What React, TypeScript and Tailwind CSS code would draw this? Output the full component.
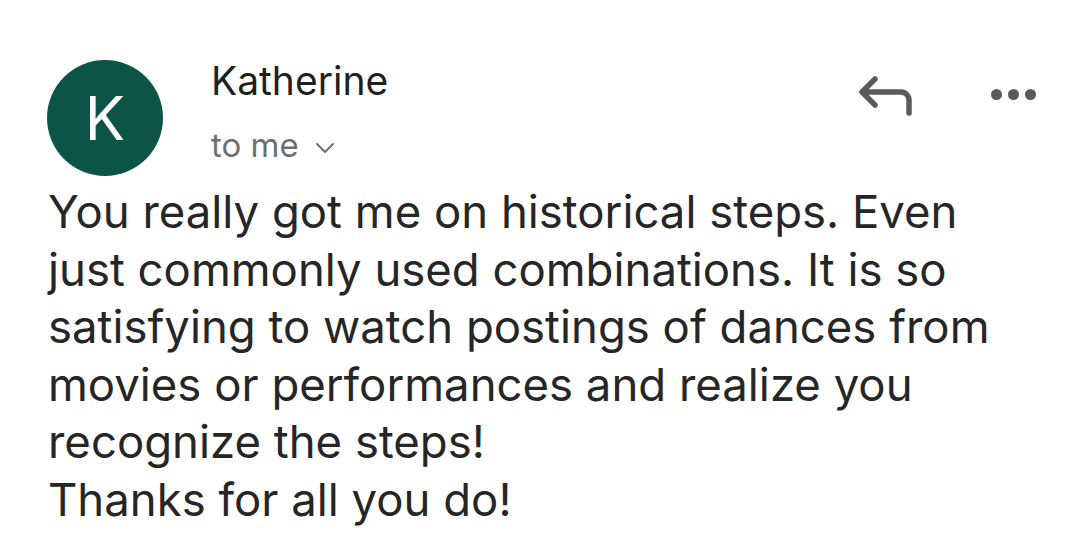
import React from 'react';

const body = [
  'You really got me on historical steps. Even',
  'just commonly used combinations. It is so',
  'satisfying to watch postings of dances from',
  'movies or performances and realize you',
  'recognize the steps!',
  'Thanks for all you do!',
];

export default function App() {
  return (
    <div className="w-[1080px] h-[540px] bg-white overflow-hidden text-[#222222] font-['Inter','Roboto',sans-serif]">
      <div className="flex items-start pl-[47px] pr-[44px] pt-[60px]">
        <div className="w-[116px] h-[116px] rounded-full bg-[#0c5446] flex items-center justify-center shrink-0">
          <span className="text-white text-[60px] leading-none font-normal">K</span>
        </div>
        <div className="flex-1 pl-[48px]">
          <div className="text-[39px] leading-[42px] text-[#1f1f1f]">Katherine</div>
          <div className="mt-[23px] flex items-center gap-[16px] text-[33px] leading-[40px] text-[#6f6f6f]">
            to me
            <svg width="20" height="12" viewBox="0 0 20 12" className="mt-[6px]">
              <path d="M2 2l8 8 8-8" fill="none" stroke="#6f6f6f" strokeWidth="2" strokeLinecap="round" strokeLinejoin="round" />
            </svg>
          </div>
        </div>
        <div className="flex items-start gap-[76px] pt-[16px]">
          <svg width="56" height="40" viewBox="0 0 56 40">
            <path d="M50 37V24a8 8 0 0 0-8-8H4M16 3L3 16l13 13" fill="none" stroke="#5a5a5a" strokeWidth="5.5" strokeLinecap="round" strokeLinejoin="round" />
          </svg>
          <div className="flex gap-[6px] pt-[13px]">
            <span className="w-[11px] h-[11px] rounded-full bg-[#5a5a5a]" />
            <span className="w-[11px] h-[11px] rounded-full bg-[#5a5a5a]" />
            <span className="w-[11px] h-[11px] rounded-full bg-[#5a5a5a]" />
          </div>
        </div>
      </div>
      <div className="pl-[48px] mt-[7px] text-[45.5px] leading-[57.5px] text-[#262626]">
        {body.map((l) => (
          <div key={l} className="whitespace-nowrap">{l}</div>
        ))}
      </div>
    </div>
  );
}
